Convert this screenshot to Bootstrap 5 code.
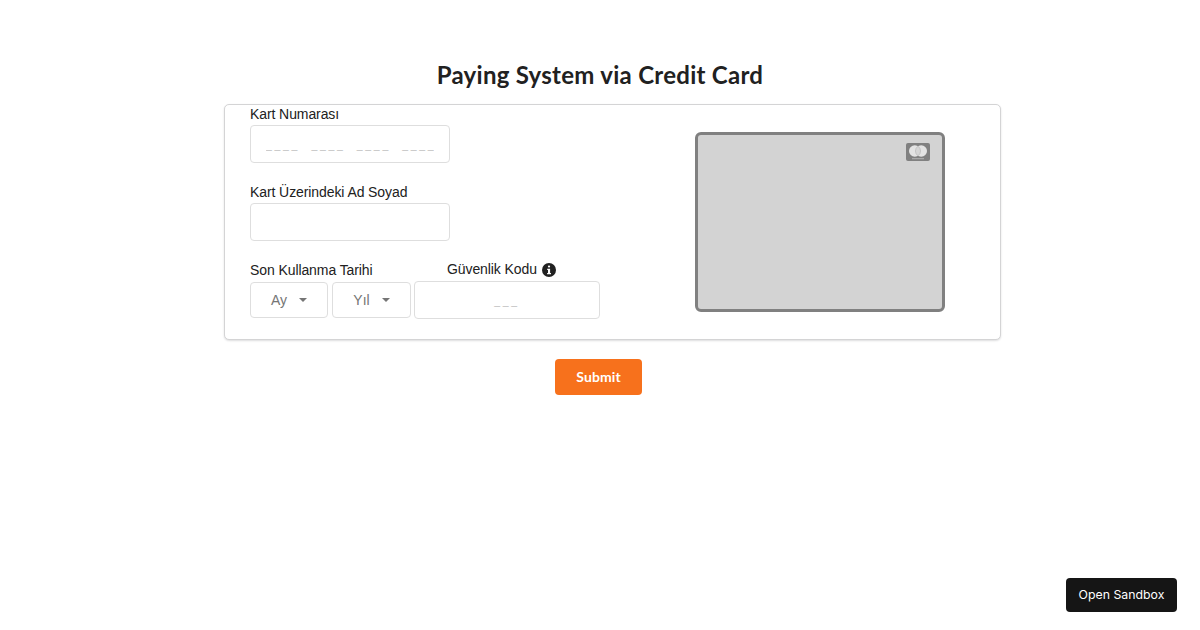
<!DOCTYPE html>
<html lang="tr">
<head>
    <meta charset="UTF-8">
    <title>Paying System via Credit Card</title>
    <link href="https://cdn.jsdelivr.net/npm/bootstrap@5.3.3/dist/css/bootstrap.min.css" rel="stylesheet">
    <style>
        body {
            background-color: #fff;
            color: #212121;
            font-family: "Liberation Sans", Arial, sans-serif;
            font-size: 14px;
        }

        .pay-page {
            width: 777px;
            margin-left: 224px;
            padding-top: 60px;
        }

        .pay-title {
            font-family: Lato, sans-serif;
            font-size: 24px;
            font-weight: 700;
            letter-spacing: .28px;
            line-height: 30px;
            color: #212121;
            margin: 0 0 14px;
            padding-right: 25px;
        }

        .pay-box {
            height: 236px;
            border: 1px solid #d4d4d5;
            border-radius: 5px;
            box-shadow: 0 1px 2px rgba(34, 36, 38, .15);
            padding-left: 25px;
        }

        .pay-form {
            width: 350px;
            margin-top: 1px;
        }

        .pay-label {
            display: block;
            line-height: 17px;
            height: 17px;
            margin-bottom: 2px;
            letter-spacing: -.09px;
            white-space: nowrap;
        }

        .pay-label-row {
            margin-bottom: 3px;
        }

        .pay-input {
            display: block;
            width: 200px;
            height: 38px;
            border: 1px solid #dedede;
            border-radius: 4px;
            padding: 2px 15px 0;
            font-family: "Liberation Sans", Arial, sans-serif;
            font-size: 10.5px;
            outline: none;
        }

        .pay-input::placeholder {
            color: #bdbdbd;
            opacity: 1;
        }

        .pay-card-input {
            letter-spacing: 2.7px;
            white-space: pre;
        }

        .pay-field + .pay-field {
            margin-top: 21px;
        }

        .pay-label-sec {
            margin-left: 36px;
            margin-top: -1px;
        }

        .pay-sec {
            width: 186px;
            text-align: center;
            letter-spacing: 2.7px;
            padding-left: 0;
            padding-right: 0;
            margin-left: 3px;
        }

        .pay-select {
            height: 36px;
            border: 1px solid #dedede;
            border-radius: 4px;
            background: #fff;
            color: #757575;
            font-size: 14px;
            padding: 0;
        }

        .pay-select-month {
            width: 78px;
            margin-right: 4px;
        }

        .pay-select-year {
            width: 79px;
        }

        .pay-caret {
            width: 0;
            height: 0;
            border-left: 4px solid transparent;
            border-right: 4px solid transparent;
            border-top: 4px solid #757575;
            margin-left: 12px;
        }

        .pay-info {
            width: 14px;
            height: 14px;
            margin-left: 5px;
        }

        .pay-visual {
            width: 250px;
            height: 180px;
            margin-left: 95px;
            margin-top: 27px;
            background-color: #d3d3d3;
            border: 3px solid #808080;
            border-radius: 6px;
            padding: 8px 12px 0 0;
        }

        .pay-submit {
            width: 87px;
            height: 36px;
            margin-top: 19px;
            margin-left: 331px;
            background-color: #f7711c;
            border: 0;
            border-radius: 4px;
            color: #fff;
            font-family: Lato, sans-serif;
            font-size: 14px;
            font-weight: 700;
            letter-spacing: .1px;
            padding: 0 0 2px;
        }

        .sandbox-btn {
            position: fixed;
            left: 1066px;
            top: 578px;
            width: 111px;
            height: 34px;
            background-color: #151515;
            border: 0;
            border-radius: 4px;
            color: #fff;
            font-family: Inter, sans-serif;
            font-size: 12.3px;
            padding: 0;
        }
    </style>
</head>
<body>
<div class="pay-page">
    <h1 class="pay-title text-center">Paying System via Credit Card</h1>

    <div class="pay-box d-flex bg-white">
        <div class="pay-form">
            <div class="pay-field">
                <label class="pay-label" for="cardNo">Kart Numarası</label>
                <input id="cardNo" class="pay-input pay-card-input" placeholder="____  ____  ____  ____">
            </div>
            <div class="pay-field">
                <label class="pay-label" for="cardName">Kart Üzerindeki Ad Soyad</label>
                <input id="cardName" class="pay-input">
            </div>
            <div class="pay-field d-flex">
                <div>
                    <label class="pay-label pay-label-row">Son Kullanma Tarihi</label>
                    <div class="d-flex">
                        <button type="button" class="pay-select pay-select-month d-flex align-items-center justify-content-center">Ay<span class="pay-caret"></span></button>
                        <button type="button" class="pay-select pay-select-year d-flex align-items-center justify-content-center">Yıl<span class="pay-caret"></span></button>
                    </div>
                </div>
                <div>
                    <label class="pay-label pay-label-row pay-label-sec d-flex align-items-center" for="secCode">Güvenlik Kodu
                        <svg class="pay-info" viewBox="0 0 14 14" aria-hidden="true">
                            <circle cx="7" cy="7" r="7" fill="#212121"/>
                            <rect x="5.9" y="2.4" width="2.2" height="2.2" rx="1" fill="#fff"/>
                            <path d="M5.2 5.8h2.9v4.1h.9v1.3H5.1V9.9h.9V7.1h-.8z" fill="#fff"/>
                        </svg>
                    </label>
                    <input id="secCode" class="pay-input pay-sec" placeholder="___">
                </div>
            </div>
        </div>

        <div class="pay-visual d-flex justify-content-end align-items-start">
            <svg width="24" height="18" viewBox="0 0 24 18" aria-hidden="true">
                <rect width="24" height="18" rx="2" fill="#808080"/>
                <circle cx="8.8" cy="8" r="5.8" fill="#e3e3e3"/>
                <circle cx="15.2" cy="8" r="5.8" fill="#e3e3e3"/>
                <path d="M12 3.2a5.8 5.8 0 0 1 0 9.6a5.8 5.8 0 0 1 0-9.6z" fill="#d6d6d6" stroke="#a8a8a8" stroke-width=".5"/>
                <rect x="6" y="15.2" width="12" height="1" fill="#b4b4b4"/>
            </svg>
        </div>
    </div>

    <button type="submit" class="pay-submit d-block">Submit</button>
</div>

<button type="button" class="sandbox-btn">Open Sandbox</button>

<script src="https://cdn.jsdelivr.net/npm/bootstrap@5.3.3/dist/js/bootstrap.bundle.min.js"></script>
</body>
</html>
